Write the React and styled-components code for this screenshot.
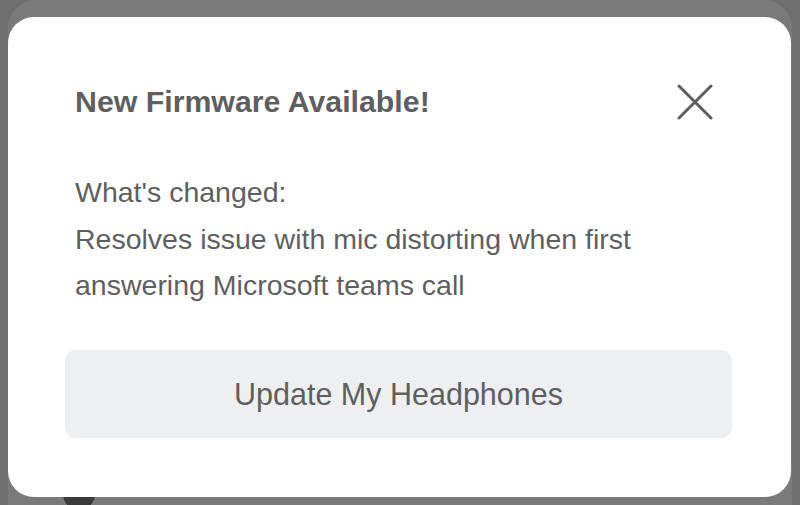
import React from 'react';
import styled, { createGlobalStyle } from 'styled-components';

const GlobalStyle = createGlobalStyle`
	html, body {
		margin: 0;
		padding: 0;
		background: #707070;
	}
	body {
		font-family: "Liberation Sans", Arial, sans-serif;
	}
`;

const Screen = styled.div`
	position: relative;
	width: 800px;
	height: 505px;
	overflow: hidden;
	background: #6f6f6f;
`;

const PageBehind = styled.div`
	position: absolute;
	inset: 0 8px -40px 8px;
	border-radius: 28px;
	background: #7a7a7a;
`;

const Avatar = styled.div`
	position: absolute;
	left: 63px;
	top: 478px;
	width: 32px;
	height: 32px;
	border-radius: 50%;
	background: #3a3a3a;
`;

const Overlay = styled.div`
	position: relative;
	display: flex;
	padding: 17px 9px 8px 8px;
	height: 100%;
	box-sizing: border-box;
`;

const Modal = styled.div`
	flex: 1;
	display: flex;
	flex-direction: column;
	background: #fff;
	border-radius: 26px;
	padding: 0 59px 0 57px;
	color: #5f5f5f;
`;

const Header = styled.div`
	display: flex;
	align-items: center;
	justify-content: space-between;
	padding: 66px 0 0 10px;
	height: 38px;
`;

const Title = styled.h2`
	margin: 0;
	font-size: 30.3px;
	font-weight: 700;
`;

const CloseButton = styled.button`
	border: 0;
	background: none;
	padding: 0;
	margin-right: 19px;
	width: 36px;
	height: 36px;
	color: #5f5f5f;
	cursor: pointer;
`;

const Body = styled.div`
	padding: 48px 0 0 10px;
	font-size: 28.5px;
	line-height: 46.5px;
`;

const Line = styled.p`
	margin: 0;
`;

const UpdateButton = styled.button`
	margin-top: 41px;
	height: 88px;
	padding-top: 3px;
	border: 0;
	border-radius: 11px;
	background: #eeeff1;
	color: #5f5f5f;
	font-family: "Liberation Sans", Arial, sans-serif;
	font-size: 30.5px;
	cursor: pointer;
`;

const App = () => {
	return (
		<Screen>
			<GlobalStyle />
			<PageBehind />
			<Avatar />
			<Overlay>
				<Modal>
					<Header>
						<Title>New Firmware Available!</Title>
						<CloseButton aria-label="Close">
							<svg width="36" height="36" viewBox="0 0 36 36" fill="none" stroke="currentColor" strokeWidth="3" strokeLinecap="round">
								<path d="M2 2 L34 34 M34 2 L2 34" />
							</svg>
						</CloseButton>
					</Header>
					<Body>
						<Line>What's changed:</Line>
						<Line>Resolves issue with mic distorting when first</Line>
						<Line>answering Microsoft teams call</Line>
					</Body>
					<UpdateButton>Update My Headphones</UpdateButton>
				</Modal>
			</Overlay>
		</Screen>
	);
};

export default App;
